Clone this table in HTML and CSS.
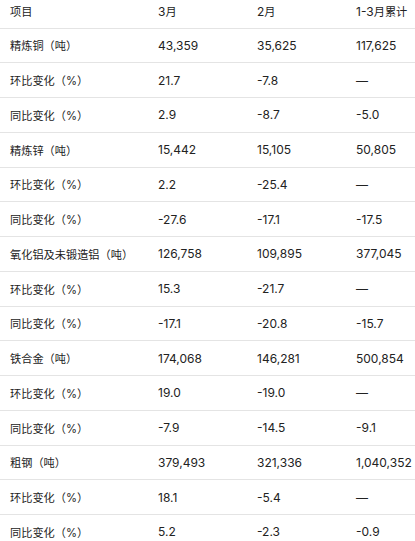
FILE: index.html
```html
<!DOCTYPE html>
<html lang="zh">
<head>
<meta charset="utf-8">
<link rel="stylesheet" href="styles.css">
</head>
<body>
<table class="data">
  <colgroup>
    <col class="c1"><col class="c2"><col class="c3"><col class="c4">
  </colgroup>
  <thead>
    <tr><th class="item">项目</th><th>3<span class="zh">月</span></th><th>2<span class="zh">月</span></th><th>1-3<span class="zh">月累计</span></th></tr>
  </thead>
  <tbody>
    <tr><td class="item">精炼铜（吨）</td><td>43,359</td><td>35,625</td><td>117,625</td></tr>
    <tr><td class="item">环比变化（%）</td><td>21.7</td><td>-7.8</td><td>—</td></tr>
    <tr><td class="item">同比变化（%）</td><td>2.9</td><td>-8.7</td><td>-5.0</td></tr>
    <tr><td class="item">精炼锌（吨）</td><td>15,442</td><td>15,105</td><td>50,805</td></tr>
    <tr><td class="item">环比变化（%）</td><td>2.2</td><td>-25.4</td><td>—</td></tr>
    <tr><td class="item">同比变化（%）</td><td>-27.6</td><td>-17.1</td><td>-17.5</td></tr>
    <tr><td class="item">氧化铝及未锻造铝（吨）</td><td>126,758</td><td>109,895</td><td>377,045</td></tr>
    <tr><td class="item">环比变化（%）</td><td>15.3</td><td>-21.7</td><td>—</td></tr>
    <tr><td class="item">同比变化（%）</td><td>-17.1</td><td>-20.8</td><td>-15.7</td></tr>
    <tr><td class="item">铁合金（吨）</td><td>174,068</td><td>146,281</td><td>500,854</td></tr>
    <tr><td class="item">环比变化（%）</td><td>19.0</td><td>-19.0</td><td>—</td></tr>
    <tr><td class="item">同比变化（%）</td><td>-7.9</td><td>-14.5</td><td>-9.1</td></tr>
    <tr><td class="item">粗钢（吨）</td><td>379,493</td><td>321,336</td><td>1,040,352</td></tr>
    <tr><td class="item">环比变化（%）</td><td>18.1</td><td>-5.4</td><td>—</td></tr>
    <tr><td class="item">同比变化（%）</td><td>5.2</td><td>-2.3</td><td>-0.9</td></tr>
  </tbody>
</table>
</body>
</html>
```

FILE: styles.css
```css
html, body {
  margin: 0;
  padding: 0;
  background: #ffffff;
}
body {
  font-family: Inter, "Noto Sans CJK SC", sans-serif;
  font-size: 12px;
  color: #222222;
  overflow: hidden;
}
.data {
  width: 415px;
  table-layout: fixed;
  border-collapse: collapse;
  margin-top: -6.25px;
}
.c1 { width: 148px; }
.c2 { width: 99px; }
.c3 { width: 99px; }
.c4 { width: 69px; }
.data th,
.data td {
  height: 33.75px;
  padding: 0 0 0 10px;
  text-align: left;
  font-weight: normal;
  vertical-align: middle;
  white-space: nowrap;
  border-bottom: 1px solid #e4e4e4;
}
.data .item,
.data .zh {
  font-size: 11.2px;
}
.data tbody tr:last-child td {
  border-bottom: none;
}
```
